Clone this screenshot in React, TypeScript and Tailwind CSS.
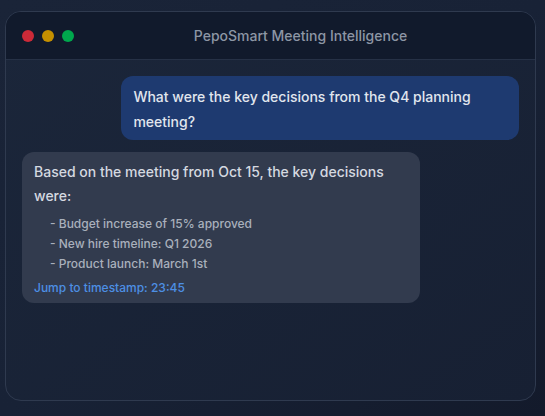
import React from 'react';

type Message = {
  role: 'user' | 'assistant';
  text: string;
  points?: string[];
  link?: string;
};

const messages: Message[] = [
  { role: 'user', text: 'What were the key decisions from the Q4 planning meeting?' },
  {
    role: 'assistant',
    text: 'Based on the meeting from Oct 15, the key decisions were:',
    points: ['Budget increase of 15% approved', 'New hire timeline: Q1 2026', 'Product launch: March 1st'],
    link: 'Jump to timestamp: 23:45',
  },
];

export default function App() {
  return (
    <div
      className="w-[545px] h-[416px] bg-gradient-to-br from-[#1a2438] via-[#182236] to-[#131a2b] pt-[11px] pl-[5px]"
      style={{ fontFamily: 'Inter, "Noto Sans", sans-serif' }}
    >
      {/* Window */}
      <div className="w-[531px] h-[390px] rounded-2xl border border-[#2f3a4f] bg-gradient-to-br from-[#1b263a] to-[#172033] overflow-hidden flex flex-col">
        {/* Title bar */}
        <div className="h-[48px] shrink-0 flex items-center gap-2 px-4 bg-[#111a2c] border-b border-[#263146]">
          <div className="flex items-center gap-2">
            <span className="w-3 h-3 rounded-full bg-[#cc2a38]" />
            <span className="w-3 h-3 rounded-full bg-[#c59000]" />
            <span className="w-3 h-3 rounded-full bg-[#00a84d]" />
          </div>
          <div className="flex-1 text-center text-[14px] font-medium text-[#8d96a5]">
            PepoSmart Meeting Intelligence
          </div>
        </div>

        {/* Chat */}
        <div className="flex flex-col gap-3 p-4">
          {messages.map((m, i) =>
            m.role === 'user' ? (
              <div key={i} className="flex justify-end">
                <div className="max-w-[80%] w-[398px] rounded-xl bg-[#1e3a70] px-3 pt-2 pb-[6px] text-[14px] leading-[25px] font-medium text-[#e1e6ee]">
                  {m.text}
                </div>
              </div>
            ) : (
              <div key={i} className="flex justify-start">
                <div className="max-w-[80%] w-[398px] rounded-xl bg-[#323b4e] px-3 pt-2 pb-[5px] font-medium text-[#d5d9e0]">
                  <p className="text-[14px] leading-[24px]">{m.text}</p>
                  <ul className="mt-[6px] pl-4 text-[12px] leading-5 text-[#a9b0bc]">
                    {m.points?.map((p) => (
                      <li key={p}>- {p}</li>
                    ))}
                  </ul>
                  <div className="mt-1 text-[12px] leading-5 text-[#4d8fe4]">{m.link}</div>
                </div>
              </div>
            )
          )}
        </div>
      </div>
    </div>
  );
}
